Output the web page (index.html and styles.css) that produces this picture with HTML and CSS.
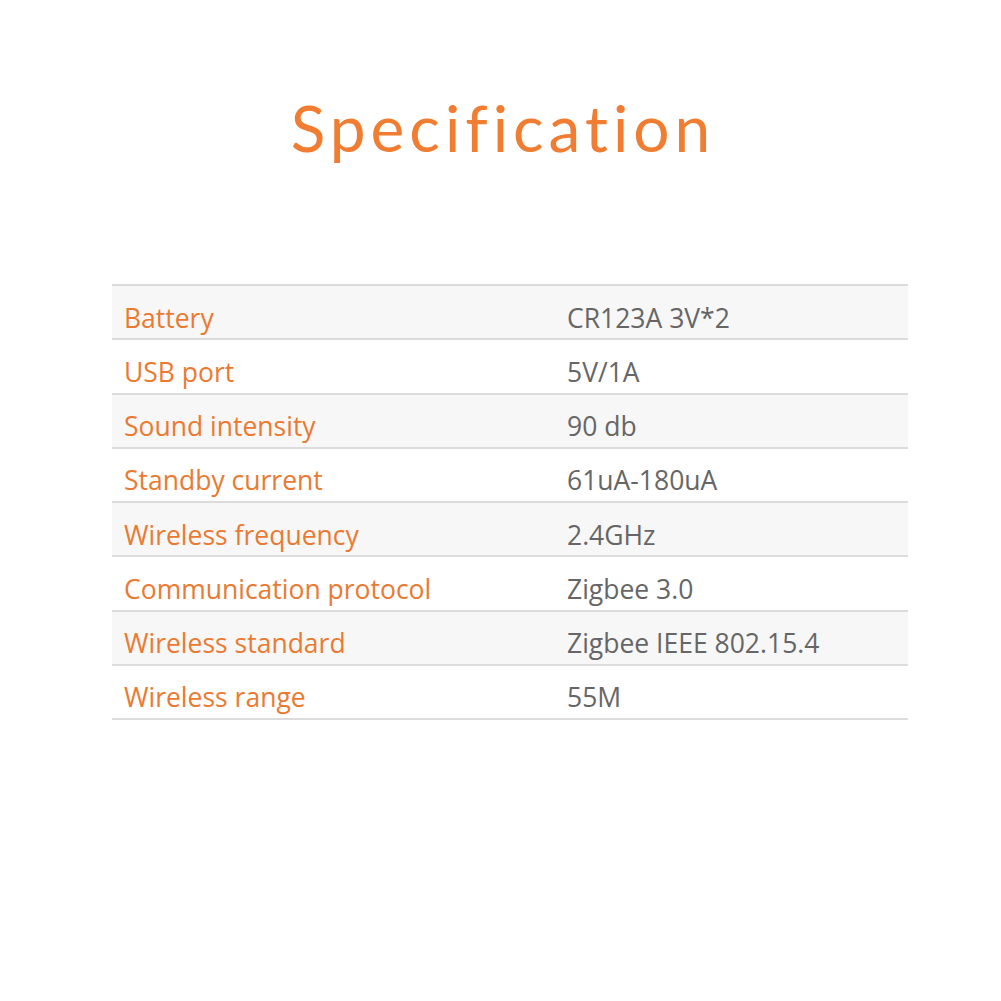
FILE: index.html
```html
<!DOCTYPE html>
<html>
<head>
<meta charset="utf-8">
<link rel="stylesheet" href="styles.css">
</head>
<body>
<div class="page">
  <h1 class="title">Specification</h1>
  <div class="spec">
    <div class="row alt"><div class="label">Battery</div><div class="value">CR123A 3V*2</div></div>
    <div class="row"><div class="label">USB port</div><div class="value">5V/1A</div></div>
    <div class="row alt"><div class="label">Sound intensity</div><div class="value">90 db</div></div>
    <div class="row"><div class="label">Standby current</div><div class="value">61uA-180uA</div></div>
    <div class="row alt"><div class="label">Wireless frequency</div><div class="value">2.4GHz</div></div>
    <div class="row"><div class="label">Communication protocol</div><div class="value">Zigbee 3.0</div></div>
    <div class="row alt"><div class="label">Wireless standard</div><div class="value">Zigbee IEEE 802.15.4</div></div>
    <div class="row"><div class="label">Wireless range</div><div class="value">55M</div></div>
  </div>
</div>
</body>
</html>
```
FILE: styles.css
```css
html, body { margin: 0; padding: 0; background: #fff; }
.page { width: 1001px; padding-top: 88px; }
.title {
  margin: 0;
  text-align: center;
  font-family: "Lato", sans-serif;
  font-weight: 400;
  font-size: 64px;
  line-height: 80px;
  color: #f07d31;
  letter-spacing: 5px;
  padding-left: 5px;
}
.spec {
  margin: 116px 0 0 112px;
  width: 796px;
  border-top: 2px solid #dcdcdc;
  font-family: "Open Sans", sans-serif;
  font-size: 26.5px;
  line-height: 36px;
}
.row {
  box-sizing: border-box;
  display: flex;
  align-items: center;
  height: 54.25px;
  padding-top: 11px;
  border-bottom: 2px solid #dcdcdc;
}
.row.alt { background: #f7f7f7; }
.label { width: 443px; padding-left: 12px; color: #ea7a32; }
.value { color: #666; }
```
